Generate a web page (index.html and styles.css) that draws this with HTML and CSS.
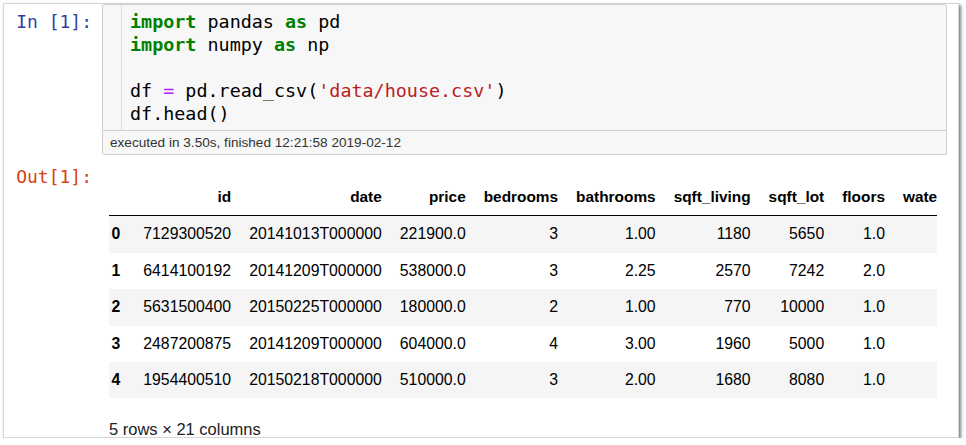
FILE: index.html
```html
<!DOCTYPE html>
<html>
<head>
<meta charset="utf-8">
<link rel="stylesheet" href="styles.css">
</head>
<body>
<div class="frame">
  <div class="cell">
    <div class="prompt in">In&nbsp;[1]:</div>
    <div class="input">
      <div class="code">
        <div class="gutter"></div>
        <pre class="src"><span class="kw">import</span> pandas <span class="kw">as</span> pd
<span class="kw">import</span> numpy <span class="kw">as</span> np

df <span class="op">=</span> pd.read_csv(<span class="str">'data/house.csv'</span>)
df.head()</pre>
      </div>
      <div class="timing">executed in 3.50s, finished 12:21:58 2019-02-12</div>
    </div>
  </div>
  <div class="cell out-cell">
    <div class="prompt out">Out[1]:</div>
    <div class="output">
      <div class="table-wrap">
        <table class="df">
          <thead>
            <tr><th class="idx"></th><th>id</th><th>date</th><th>price</th><th>bedrooms</th><th>bathrooms</th><th>sqft_living</th><th>sqft_lot</th><th>floors</th><th>waterfront</th></tr>
          </thead>
          <tbody>
            <tr><th class="idx">0</th><td>7129300520</td><td>20141013T000000</td><td>221900.0</td><td>3</td><td>1.00</td><td>1180</td><td>5650</td><td>1.0</td><td>0</td></tr>
            <tr><th class="idx">1</th><td>6414100192</td><td>20141209T000000</td><td>538000.0</td><td>3</td><td>2.25</td><td>2570</td><td>7242</td><td>2.0</td><td>0</td></tr>
            <tr><th class="idx">2</th><td>5631500400</td><td>20150225T000000</td><td>180000.0</td><td>2</td><td>1.00</td><td>770</td><td>10000</td><td>1.0</td><td>0</td></tr>
            <tr><th class="idx">3</th><td>2487200875</td><td>20141209T000000</td><td>604000.0</td><td>4</td><td>3.00</td><td>1960</td><td>5000</td><td>1.0</td><td>0</td></tr>
            <tr><th class="idx">4</th><td>1954400510</td><td>20150218T000000</td><td>510000.0</td><td>3</td><td>2.00</td><td>1680</td><td>8080</td><td>1.0</td><td>0</td></tr>
          </tbody>
        </table>
      </div>
      <p class="shape">5 rows × 21 columns</p>
    </div>
  </div>
</div>
</body>
</html>
```

FILE: styles.css
```css
html, body {
  margin: 0;
  padding: 0;
  background: #ffffff;
}

.frame {
  box-sizing: border-box;
  margin: 3px 0 0 3px;
  width: 956px;
  height: 435px;
  border: 1px solid #d6d6d6;
  box-shadow: 2px 2px 3px rgba(0, 0, 0, 0.5);
  overflow: hidden;
  background: #fff;
}

.cell {
  display: flex;
  align-items: flex-start;
}

.prompt {
  width: 98px;
  box-sizing: border-box;
  padding-right: 10px;
  text-align: right;
  font-family: "DejaVu Sans Mono", monospace;
  font-size: 18px;
  line-height: 23px;
  flex-shrink: 0;
}

.prompt.in {
  color: #303f9f;
  padding-top: 6px;
}

.prompt.out {
  color: #d84315;
  padding-top: 10px;
}

.input {
  flex: 1;
  margin-right: 11px;
  border: 1px solid #cfcfcf;
  border-radius: 2px;
  background: #f7f7f7;
}

.code {
  display: flex;
}

.gutter {
  width: 18px;
  border-right: 1px solid #dddddd;
  flex-shrink: 0;
}

.src {
  margin: 0;
  padding: 5px 0 5px 8px;
  font-family: "DejaVu Sans Mono", monospace;
  font-size: 18.4px;
  line-height: 23px;
  color: #000;
}

.kw {
  color: #008000;
  font-weight: bold;
}

.op {
  color: #aa22ff;
}

.str {
  color: #ba2121;
}

.timing {
  border-top: 1px solid #cfcfcf;
  height: 23px;
  line-height: 23px;
  padding-left: 7px;
  font-family: "Liberation Sans", Arial, sans-serif;
  font-size: 13.6px;
  color: #333;
}

.output {
  flex: 1;
  min-width: 0;
  padding-left: 7px;
  padding-top: 25px;
}

.table-wrap {
  width: 828px;
  overflow: hidden;
}

.df {
  border-collapse: collapse;
  font-family: "Liberation Sans", Arial, sans-serif;
  font-size: 15.8px;
  color: #000;
  white-space: nowrap;
}

.df th, .df td {
  padding: 9px 9px;
  line-height: 18.4px;
  text-align: right;
  vertical-align: middle;
}

.df thead th {
  font-weight: bold;
  font-size: 15.4px;
  border-bottom: 1px solid #000;
  padding-top: 8px;
}

.df th.idx {
  text-align: left;
  padding-left: 2.5px;
  padding-right: 14px;
  font-weight: bold;
}

.df tbody tr:nth-child(odd) {
  background: #f5f5f5;
}

.shape {
  margin: 21px 0 0 0;
  font-family: "Liberation Sans", Arial, sans-serif;
  font-size: 16.5px;
  line-height: 20px;
  color: #222;
}
```
